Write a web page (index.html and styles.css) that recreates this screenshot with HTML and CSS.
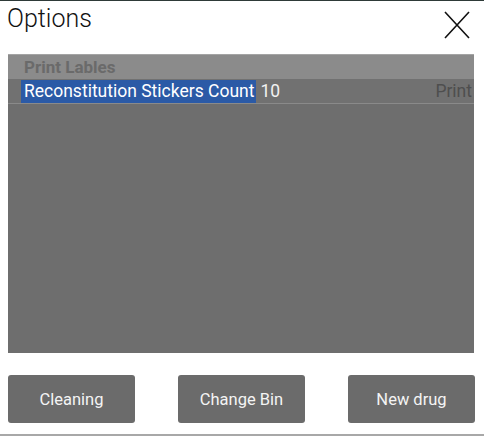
FILE: index.html
```html
<!DOCTYPE html>
<html>
<head>
<meta charset="utf-8">
<link rel="stylesheet" href="styles.css">
</head>
<body>
<div class="dialog">
  <div class="titlebar">
    <div class="title">Options</div>
    <div class="close">
      <svg width="26" height="28" viewBox="0 0 26 28"><path d="M1 1 L25 27 M25 1 L1 27" stroke="#111" stroke-width="1.6" fill="none"/></svg>
    </div>
  </div>
  <div class="panel">
    <div class="group">Print Lables</div>
    <div class="row">
      <span class="name">Reconstitution Stickers Count</span>
      <span class="value">10</span>
      <span class="action">Print</span>
    </div>
  </div>
  <div class="buttons">
    <button class="btn">Cleaning</button>
    <button class="btn">Change Bin</button>
    <button class="btn">New drug</button>
  </div>
</div>
</body>
</html>
```
FILE: styles.css
```css
html, body {
  margin: 0;
  padding: 0;
  background: #fff;
}
.dialog {
  width: 484px;
  height: 436px;
  box-sizing: border-box;
  border-top: 1px solid #2e3a38;
  border-bottom: 2px solid #a8a8a8;
  font-family: Roboto, "Liberation Sans", sans-serif;
  display: flex;
  flex-direction: column;
}
.titlebar {
  height: 53px;
  display: flex;
  justify-content: space-between;
  align-items: flex-start;
  padding: 0 14px 0 7px;
}
.title {
  font-size: 25px;
  font-weight: 300;
  color: #111;
  margin-top: 3px;
}
.close {
  margin-top: 10px;
  display: flex;
}
.panel {
  margin: 0 10px 0 8px;
  height: 299px;
  background: #6e6e6e;
  border-top: 1px solid #a4a4a4;
  box-sizing: border-box;
}
.group {
  height: 24px;
  background: #8b8b8b;
  color: #6a6a6a;
  font-weight: 700;
  font-size: 17px;
  line-height: 25px;
  padding-left: 16px;
}
.row {
  height: 24px;
  display: flex;
  align-items: center;
  background: #717171;
  border-bottom: 1px solid #8a8a8a;
  font-size: 17.5px;
  padding-left: 13px;
}
.name {
  background: #2b5aa6;
  color: #fff;
  height: 23px;
  line-height: 23px;
  padding: 0 2px 0 3px;
}
.value {
  color: #f2f2f2;
  margin-left: 4px;
}
.action {
  margin-left: auto;
  color: #4e4e4e;
  padding-right: 2px;
}
.buttons {
  display: flex;
  justify-content: space-between;
  margin: 22px 9px 0 8px;
}
.btn {
  width: 127px;
  height: 48px;
  background: #6b6b6b;
  border: none;
  border-radius: 3px;
  color: #f4f4f4;
  font-family: Roboto, "Liberation Sans", sans-serif;
  font-size: 16.5px;
  padding: 0;
}
```
